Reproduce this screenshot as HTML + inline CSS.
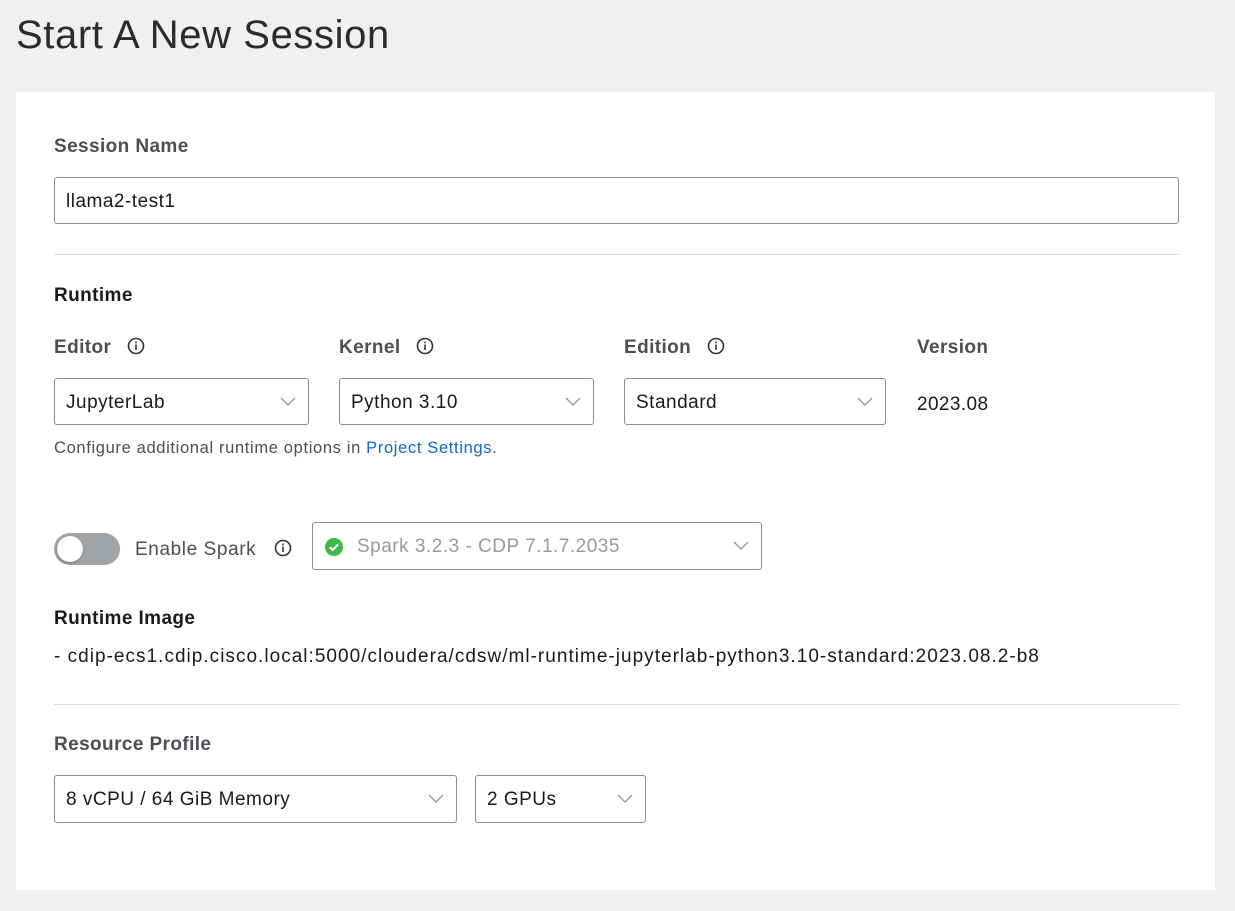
<!DOCTYPE html>
<html><head><style>
body{margin:0;width:1235px;height:911px;background:#eff0f2;font-family:"Liberation Sans",sans-serif;position:relative;overflow:hidden}
.a{position:absolute;white-space:nowrap}
h1{position:absolute;left:16px;top:13px;margin:0;font-size:40px;font-weight:300;color:#2b2b2b;letter-spacing:0.6px}
.card{position:absolute;left:16px;top:92px;width:1199px;height:798px;background:#fff}
.lbl{font-weight:bold;font-size:19px;color:#4b4f55;letter-spacing:0.4px}
.sel{position:absolute;border:1px solid #8a8d91;border-radius:3px;box-sizing:border-box;background:#fff;font-size:19px;color:#1a1a1a;padding-left:11px;padding-top:2px;display:flex;align-items:center;letter-spacing:0.5px}
.sel svg{position:absolute;right:12px;top:50%;margin-top:-5px}
.hr{position:absolute;left:54px;width:1125px;height:1px;background:#dcdcdc}
.i{display:inline-block;vertical-align:middle}
</style></head><body>
<h1>Start A New Session</h1>
<div class="card"></div>
<div class="a lbl" style="left:54px;top:136px">Session Name</div>
<div class="sel" style="left:54px;top:177px;width:1125px;height:47px">llama2-test1</div>
<div class="hr" style="top:254px"></div>
<div class="a lbl" style="left:54px;top:285px;color:#1a1a1a">Runtime</div>
<div class="a lbl" style="left:54px;top:337px">Editor <svg class="i" style="margin-left:10px;margin-top:-3px" width="18" height="18" viewBox="0 0 18 18"><circle cx="9" cy="9" r="7.5" fill="none" stroke="#333" stroke-width="1.6"/><rect x="8.2" y="7.5" width="1.6" height="5.5" fill="#333"/><rect x="8.2" y="4.6" width="1.6" height="1.7" fill="#333"/></svg></div>
<div class="a lbl" style="left:339px;top:337px">Kernel <svg class="i" style="margin-left:10px;margin-top:-3px" width="18" height="18" viewBox="0 0 18 18"><circle cx="9" cy="9" r="7.5" fill="none" stroke="#333" stroke-width="1.6"/><rect x="8.2" y="7.5" width="1.6" height="5.5" fill="#333"/><rect x="8.2" y="4.6" width="1.6" height="1.7" fill="#333"/></svg></div>
<div class="a lbl" style="left:624px;top:337px">Edition <svg class="i" style="margin-left:10px;margin-top:-3px" width="18" height="18" viewBox="0 0 18 18"><circle cx="9" cy="9" r="7.5" fill="none" stroke="#333" stroke-width="1.6"/><rect x="8.2" y="7.5" width="1.6" height="5.5" fill="#333"/><rect x="8.2" y="4.6" width="1.6" height="1.7" fill="#333"/></svg></div>
<div class="a lbl" style="left:917px;top:337px">Version</div>
<div class="sel" style="left:54px;top:378px;width:255px;height:47px">JupyterLab<svg width="16" height="10"><path d="M1 1l7 7 7-7" fill="none" stroke="#999" stroke-width="1.4"/></svg></div>
<div class="sel" style="left:339px;top:378px;width:255px;height:47px">Python 3.10<svg width="16" height="10"><path d="M1 1l7 7 7-7" fill="none" stroke="#999" stroke-width="1.4"/></svg></div>
<div class="sel" style="left:624px;top:378px;width:262px;height:47px">Standard<svg width="16" height="10"><path d="M1 1l7 7 7-7" fill="none" stroke="#999" stroke-width="1.4"/></svg></div>
<div class="a" style="left:917px;top:394px;font-size:19px;color:#1a1a1a;letter-spacing:0.4px">2023.08</div>
<div class="a" style="left:54px;top:439px;font-size:16.5px;color:#4b4f55;letter-spacing:0.65px">Configure additional runtime options in <span style="color:#1466c7">Project Settings</span>.</div>
<div class="a" style="left:54px;top:533px;width:66px;height:32px;border-radius:16px;background:#a0a3a7"></div>
<div class="a" style="left:57px;top:536px;width:26px;height:26px;border-radius:13px;background:#fff;box-shadow:0 1px 2px rgba(0,0,0,.3)"></div>
<div class="a" style="left:135px;top:539px;font-size:19px;color:#4b4f55;letter-spacing:0.6px">Enable Spark <svg class="i" style="margin-left:12px;margin-top:-3px" width="18" height="18" viewBox="0 0 18 18"><circle cx="9" cy="9" r="7.5" fill="none" stroke="#333" stroke-width="1.6"/><rect x="8.2" y="7.5" width="1.6" height="5.5" fill="#333"/><rect x="8.2" y="4.6" width="1.6" height="1.7" fill="#333"/></svg></div>
<div class="sel" style="left:312px;top:522px;width:450px;height:48px;color:#9a9a9a;padding-left:12px"><svg style="position:static;margin:0 14px 0 0" width="18" height="18" viewBox="0 0 18 18"><circle cx="9" cy="9" r="9" fill="#3cba4c"/><path d="M4.8 9.2l2.8 2.8 5.6-5.6" fill="none" stroke="#fff" stroke-width="2.2"/></svg>Spark 3.2.3 - CDP 7.1.7.2035<svg width="16" height="10"><path d="M1 1l7 7 7-7" fill="none" stroke="#999" stroke-width="1.4"/></svg></div>
<div class="a lbl" style="left:54px;top:608px;color:#1a1a1a">Runtime Image</div>
<div class="a" style="left:54px;top:646px;font-size:19px;color:#1a1a1a;letter-spacing:1.02px">- cdip-ecs1.cdip.cisco.local:5000/cloudera/cdsw/ml-runtime-jupyterlab-python3.10-standard:2023.08.2-b8</div>
<div class="hr" style="top:704px"></div>
<div class="a lbl" style="left:54px;top:734px">Resource Profile</div>
<div class="sel" style="left:54px;top:775px;width:403px;height:48px">8 vCPU / 64 GiB Memory<svg width="16" height="10"><path d="M1 1l7 7 7-7" fill="none" stroke="#999" stroke-width="1.4"/></svg></div>
<div class="sel" style="left:475px;top:775px;width:171px;height:48px">2 GPUs<svg width="16" height="10"><path d="M1 1l7 7 7-7" fill="none" stroke="#999" stroke-width="1.4"/></svg></div>
</body></html>
